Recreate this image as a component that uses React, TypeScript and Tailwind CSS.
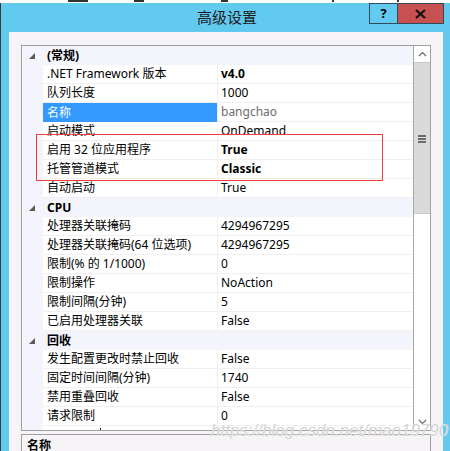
import type { ReactNode } from "react";

type Prop = {
  name: string;
  value: string;
  bold?: boolean;
  dim?: boolean;
  selected?: boolean;
};

type Section = { title: string; rows: Prop[] };

const SECTIONS: Section[] = [
  {
    title: "(常规)",
    rows: [
      { name: ".NET Framework 版本", value: "v4.0", bold: true },
      { name: "队列长度", value: "1000" },
      { name: "名称", value: "bangchao", dim: true, selected: true },
      { name: "启动模式", value: "OnDemand" },
      { name: "启用 32 位应用程序", value: "True", bold: true },
      { name: "托管管道模式", value: "Classic", bold: true },
      { name: "自动启动", value: "True" },
    ],
  },
  {
    title: "CPU",
    rows: [
      { name: "处理器关联掩码", value: "4294967295" },
      { name: "处理器关联掩码(64 位选项)", value: "4294967295" },
      { name: "限制(% 的 1/1000)", value: "0" },
      { name: "限制操作", value: "NoAction" },
      { name: "限制间隔(分钟)", value: "5" },
      { name: "已启用处理器关联", value: "False" },
    ],
  },
  {
    title: "回收",
    rows: [
      { name: "发生配置更改时禁止回收", value: "False" },
      { name: "固定时间间隔(分钟)", value: "1740" },
      { name: "禁用重叠回收", value: "False" },
      { name: "请求限制", value: "0" },
    ],
  },
];

function Expander() {
  return (
    <svg width="6" height="6" viewBox="0 0 6 6" className="block">
      <polygon points="6,0 6,6 0,6" fill="#5a5a5a" />
    </svg>
  );
}

function CategoryRow({ title }: { title: string }) {
  return (
    <div className="flex h-[19px] shrink-0 items-center bg-[#f4f4fc]">
      <div className="flex w-[21px] shrink-0 justify-end pr-[8px]">
        <Expander />
      </div>
      <div className="pl-1 font-bold text-black">{title}</div>
    </div>
  );
}

function PropRow({ name, value, bold, dim, selected }: Prop) {
  return (
    <div className="flex h-[19px] shrink-0">
      <div className="w-[21px] shrink-0 bg-[#f4f4fc]" />
      <div
        className={
          selected
            ? "flex w-[175px] shrink-0 items-center border-r border-[#f0f0f0] bg-[#3399ff] pl-1 text-white"
            : "flex w-[175px] shrink-0 items-center border-r border-b border-[#f0f0f0] bg-white pl-1 text-black"
        }
      >
        <span className="whitespace-nowrap">{name}</span>
      </div>
      <div className="flex min-w-0 flex-1 items-center border-b border-[#f0f0f0] bg-white pl-[3px]">
        <span
          className={
            bold
              ? "whitespace-nowrap font-bold text-black"
              : dim
                ? "whitespace-nowrap text-[#6d6d6d]"
                : "whitespace-nowrap text-black"
          }
        >
          {value}
        </span>
      </div>
    </div>
  );
}

// the next row is scrolled almost out of view: only the top of one glyph shows
function CutRow() {
  return (
    <div className="flex h-[19px] shrink-0">
      <div className="w-[21px] shrink-0 bg-[#f4f4fc]" />
      <div className="w-[175px] shrink-0 border-r border-[#f0f0f0] bg-white pl-[57px] pt-[2px]">
        <div className="h-[2px] w-[1px] bg-[#222]" />
      </div>
      <div className="flex-1 bg-white" />
    </div>
  );
}

function ArrowButton({ children }: { children: ReactNode }) {
  return (
    <div className="flex h-[16px] shrink-0 items-center justify-center bg-white">{children}</div>
  );
}

function Scrollbar() {
  return (
    <div className="flex w-[17px] shrink-0 flex-col border-l border-[#a8a8a8] bg-white">
      <ArrowButton>
        <svg width="9" height="6" viewBox="0 0 9 6">
          <polyline points="1,5 4.5,1.5 8,5" fill="none" stroke="#6a6a6a" strokeWidth="1.2" />
        </svg>
      </ArrowButton>
      <div className="flex h-[152px] shrink-0 justify-center border-y border-[#c8c8c8] bg-[#dadada] pt-[72px]">
        <svg width="8" height="8" viewBox="0 0 8 8" className="block">
          <rect x="0" y="0" width="8" height="2" fill="#6e6e6e" />
          <rect x="0" y="3" width="8" height="2" fill="#6e6e6e" />
          <rect x="0" y="6" width="8" height="2" fill="#6e6e6e" />
        </svg>
      </div>
      <div className="flex-1" />
      <div className="flex h-[17px] shrink-0 items-center justify-center">
        <svg width="9" height="6" viewBox="0 0 9 6">
          <polyline points="1,1 4.5,4.5 8,1" fill="none" stroke="#6a6a6a" strokeWidth="1.2" />
        </svg>
      </div>
    </div>
  );
}

export default function App() {
  return (
    <div className="relative h-[451px] w-[450px] overflow-hidden bg-white font-['Noto_Sans','Noto_Sans_CJK_SC',sans-serif] text-[12px] leading-none">
      {/* tops of the text of the window behind */}
      <div className="relative h-[3px] bg-white">
        <span className="absolute left-[68px] top-0 h-[2px] w-[20px] bg-[#333]" />
        <span className="absolute left-[134px] top-0 h-[2px] w-[10px] bg-[#333]" />
        <span className="absolute left-[221px] top-0 h-[2px] w-[7px] bg-[#333]" />
        <span className="absolute left-[332px] top-0 h-[2px] w-[2px] bg-[#333]" />
        <span className="absolute left-[397px] top-0 h-[2px] w-[2px] bg-[#333]" />
      </div>

      <div className="flex h-[448px] flex-col border-l border-[#3c3c3c] bg-[#62c9ef] pl-[8px] pr-[7px]">
        {/* title bar */}
        <div className="relative flex h-[29px] shrink-0 items-center justify-center">
          <span className="pl-[2px] text-[15px] text-[#1e1e1e]">高级设置</span>
          <div className="absolute right-[-1px] top-0 flex h-[21px]">
            <div className="flex w-[29px] items-center justify-center border border-[#34495a] bg-[#62c9ef] text-[13px] font-bold text-black">
              ?
            </div>
            <div className="flex w-[46px] items-center justify-center border border-l-0 border-[#34495a] bg-[#c75050]">
              <svg width="11" height="10" viewBox="0 0 11 10">
                <path d="M1 1 L10 9 M10 1 L1 9" stroke="#111" strokeWidth="2.2" />
              </svg>
            </div>
          </div>
        </div>

        {/* client area */}
        <div className="flex min-h-0 flex-1 flex-col bg-[#f7f4f7] px-[12px] pt-[13px]">
          <div className="relative flex h-[386px] shrink-0 border border-[#a0a0a0] bg-white">
            <div className="flex min-w-0 flex-1 flex-col overflow-hidden">
              {SECTIONS.map((s) => (
                <div key={s.title} className="flex flex-col">
                  <CategoryRow title={s.title} />
                  {s.rows.map((r) => (
                    <PropRow key={r.name} {...r} />
                  ))}
                </div>
              ))}
              <CutRow />
            </div>
            <Scrollbar />

            {/* red annotation box */}
            <div className="pointer-events-none absolute left-[14px] top-[88px] h-[47px] w-[347px] border border-[#f03c3c]" />
          </div>

          {/* description pane */}
          <div className="mt-[3px] flex-1 border border-[#a0a0a0] bg-[#f7f4f7] px-[5px] pt-[5px]">
            <span className="font-bold text-black">名称</span>
          </div>
        </div>
      </div>

      {/* watermark */}
      <div className="pointer-events-none absolute left-[211px] top-[422px] whitespace-nowrap font-['Liberation_Sans',sans-serif] text-[17px] italic leading-none text-[#d4d4d4] [text-shadow:0_0_1px_#ffffff]">
        https://blog.csdn.net/mao197907
      </div>
    </div>
  );
}
